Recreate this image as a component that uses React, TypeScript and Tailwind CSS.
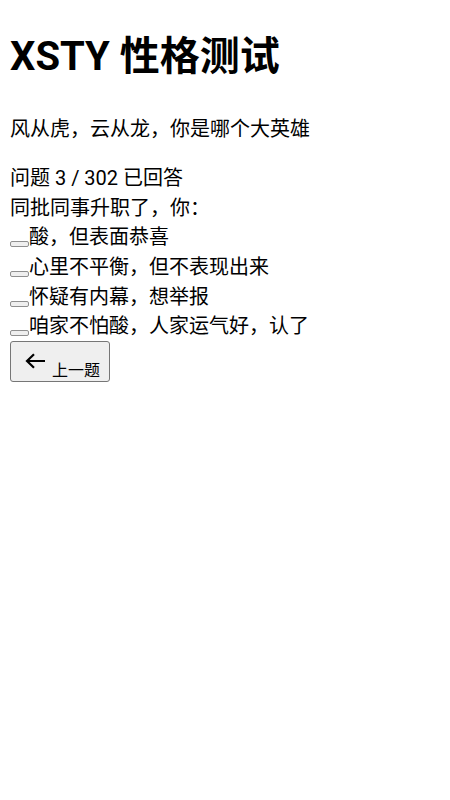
import React from "react";

const options = [
  "酸，但表面恭喜",
  "心里不平衡，但不表现出来",
  "怀疑有内幕，想举报",
  "咱家不怕酸，人家运气好，认了",
];

export default function App() {
  return (
    <div
      className="min-h-[800px] bg-white px-[10px] text-black"
      style={{ fontFamily: 'Roboto, "Noto Sans CJK SC", sans-serif' }}
    >
      <h1 className="m-0 pt-[26.8px] pb-[26.8px] text-[40px] font-bold leading-normal">
        XSTY 性格测试
      </h1>
      <p className="m-0 h-[29.6px] text-[20px] leading-normal">风从虎，云从龙，你是哪个大英雄</p>
      <div className="mt-[20px] text-[20px] leading-normal">
        <div className="h-[29.6px]">问题 3 / 302 已回答</div>
        <div className="h-[29.6px]">同批同事升职了，你：</div>
        {options.map((o) => (
          <div key={o} className="flex h-[29.6px] items-start">
            <button className="mt-[19px] h-[6px] w-[19px] shrink-0 rounded-[2px] border border-[#8f8f8f] bg-[#efefef]" />
            <span>{o}</span>
          </div>
        ))}
        <button className="flex h-[41px] w-[100px] items-start rounded-[3px] border border-[#767676] bg-[#efefef] pl-[14px] pt-[11px]">
          <svg width="21" height="16" viewBox="0 0 21 16" className="shrink-0">
            <path d="M20 8H2.5M9 1.2L2 8l7 6.8" fill="none" stroke="#000" strokeWidth="2.2" />
          </svg>
          <span className="ml-[6px] mt-[10px] text-[16px] leading-[16px]">上一题</span>
        </button>
      </div>
    </div>
  );
}
